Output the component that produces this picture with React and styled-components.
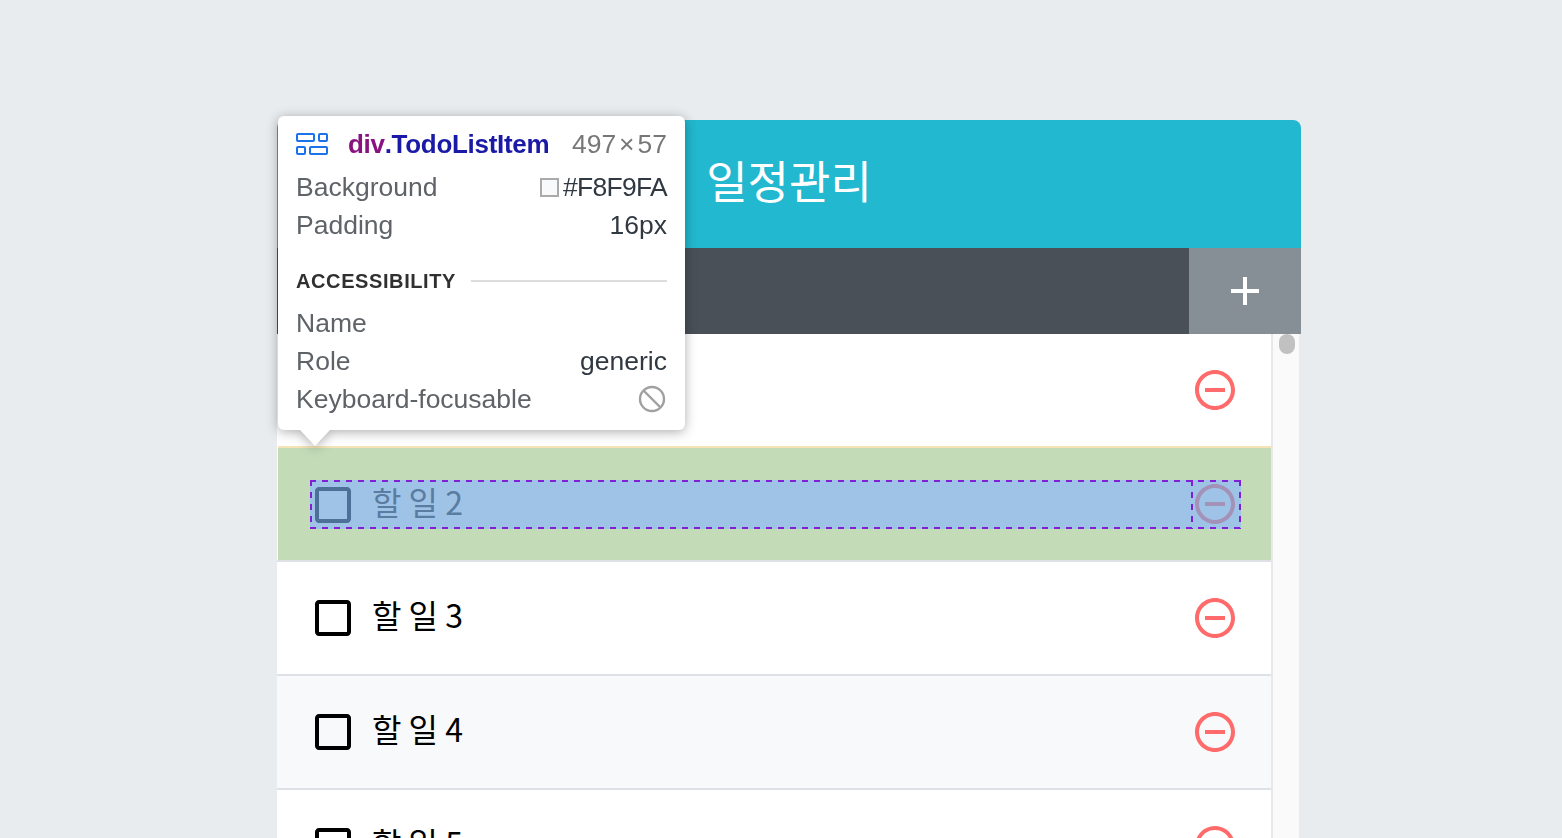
import React from 'react';
import styled, { createGlobalStyle } from 'styled-components';
import { MdAdd, MdCheckBoxOutlineBlank, MdRemoveCircleOutline } from 'react-icons/md';

const GlobalStyle = createGlobalStyle`
  html, body {
    margin: 0;
    height: 100%;
    overflow: hidden;
    background: #e9ecef;
    font-family: "Liberation Sans", "Noto Sans CJK KR", sans-serif;
  }
`;

const Template = styled.div`
  position: relative;
  width: 1024px;
  margin: 120px 0 0 277px;
`;

const Title = styled.div`
  height: 128px;
  box-sizing: border-box;
  padding-bottom: 10px;
  display: flex;
  align-items: center;
  justify-content: center;
  background: #22b8cf;
  color: #fff;
  font-family: "Noto Sans CJK KR", sans-serif;
  font-size: 45px;
  border-radius: 8px 8px 0 0;
`;

const InsertBar = styled.div`
  height: 86px;
  display: flex;
  justify-content: flex-end;
  background: #495057;
`;

const AddButton = styled.div`
  width: 112px;
  display: flex;
  align-items: center;
  justify-content: center;
  background: #868e96;
  color: #fff;
  font-size: 48px;
`;

const Body = styled.div`
  display: flex;
  width: 1022px;
  height: 504px;
  overflow: hidden;
`;

const List = styled.div`
  flex: 1;
  min-width: 0;
  background: #fff;
`;

const Scrollbar = styled.div`
  position: relative;
  width: 26px;
  border-left: 2px solid #e8e8e8;
  background: #fafafa;
`;

const Thumb = styled.div`
  margin-left: 6px;
  width: 16px;
  height: 20px;
  border-radius: 8px;
  background: #c1c1c1;
`;

const Row = styled.div`
  display: flex;
  align-items: center;
  padding: 32px;
  border-top: 2px solid #dee2e6;
  background: ${(p) => (p.$alt ? '#f8f9fa' : '#fff')};
  &:first-child {
    border-top: none;
  }
`;

const Check = styled.div`
  flex: 1;
  min-width: 0;
  display: flex;
  align-items: center;
  height: 48px;
  font-size: 48px;
  color: #000;
`;

const Label = styled.span`
  margin: 0 0 8px 15px;
  font-family: "Noto Sans CJK KR", sans-serif;
  font-size: 32px;
  line-height: 48px;
  color: ${(p) => p.$color || '#000'};
`;

const Remove = styled.div`
  width: 48px;
  height: 48px;
  display: flex;
  font-size: 48px;
  color: ${(p) => p.$color || '#ff6b6b'};
`;

const dashH = 'repeating-linear-gradient(90deg, #7f1fd6 0 6px, transparent 6px 12px)';
const dashV = 'repeating-linear-gradient(180deg, #7f1fd6 0 6px, transparent 6px 12px)';

/* devtools inspect overlay: margin / padding / content boxes */
const HighlightRow = styled.div`
  display: flex;
  margin: 0 -1px 0 1px;
  padding: 32px 31px 31px 32px;
  border-top: 2px solid #f5e2b5;
  background: #c3dbb7;
`;

const HighlightBox = styled.div`
  flex: 1;
  min-width: 0;
  display: flex;
  height: 49px;
  background-color: #9fc3e7;
  background-image: ${dashH}, ${dashH}, ${dashV}, ${dashV};
  background-size: 100% 2px, 100% 2px, 2px 100%, 2px 100%;
  background-position: 0 0, 0 100%, 0 0, 100% 0;
  background-repeat: no-repeat;
  ${Check} {
    height: 49px;
    margin-left: -1px;
    color: #4d7099;
    background: ${dashV} 100% 0 / 2px 100% no-repeat;
  }
  ${Remove} {
    margin-left: -2px;
    margin-right: 2px;
    height: 49px;
  }
`;

const Tooltip = styled.div`
  position: absolute;
  left: 1px;
  top: -4px;
  width: 407px;
  height: 314px;
  box-sizing: border-box;
  padding: 12px 18px 0 18px;
  border-radius: 6px;
  background: #fff;
  font-size: 26.5px;
  color: #303942;
  filter: drop-shadow(0 2px 6px rgba(0, 0, 0, 0.32));
  &::after {
    content: '';
    position: absolute;
    left: 22px;
    bottom: -16px;
    border-left: 15px solid transparent;
    border-right: 15px solid transparent;
    border-top: 16px solid #fff;
  }
`;

const TipHead = styled.div`
  display: flex;
  align-items: center;
  height: 32px;
  margin-bottom: 8px;
`;

const TipName = styled.span`
  font-size: 26px;
  font-weight: 700;
  letter-spacing: -0.3px;
  color: ${(p) => p.$color};
  margin-left: ${(p) => p.$gap || 0}px;
`;

const TipSize = styled.span`
  margin-left: auto;
  color: #777;
  word-spacing: -4.4px;
`;

const TipRow = styled.div`
  display: flex;
  align-items: center;
  justify-content: space-between;
  height: 38px;
`;

const TipLabel = styled.span`
  color: #5f6368;
`;

const TipValue = styled.span`
  display: flex;
  align-items: center;
  gap: 4px;
  letter-spacing: ${(p) => (p.$tight ? '-0.7px' : 'normal')};
`;

const Swatch = styled.span`
  width: 19px;
  height: 19px;
  box-sizing: border-box;
  border: 2px solid #aaa;
  background: #f8f9fa;
`;

const Section = styled.div`
  display: flex;
  align-items: center;
  gap: 15px;
  margin: 25px 0 11px;
  height: 24px;
  font-size: 20px;
  font-weight: 700;
  letter-spacing: 0.6px;
  color: #303030;
  &::after {
    content: '';
    flex: 1;
    height: 2px;
    background: #ddd;
  }
`;

const GridIcon = () => (
  <svg width="32" height="22" viewBox="0 0 32 22" fill="none" stroke="#1a73e8" strokeWidth="2">
    <rect x="1" y="1" width="17" height="7" rx="1" />
    <rect x="23" y="1" width="8" height="7" rx="1" />
    <rect x="1" y="14" width="8" height="7" rx="1" />
    <rect x="14" y="14" width="17" height="7" rx="1" />
  </svg>
);

const BanIcon = () => (
  <svg width="28" height="28" viewBox="0 0 28 28" fill="none" stroke="#a0a0a0" strokeWidth="2.4" style={{ marginRight: 1 }}>
    <circle cx="14" cy="14" r="12" />
    <path d="M5.5 5.5l17 17" />
  </svg>
);

const todos = [
  { id: 1, text: '할 일 1' },
  { id: 2, text: '할 일 2', inspected: true },
  { id: 3, text: '할 일 3' },
  { id: 4, text: '할 일 4', alt: true },
  { id: 5, text: '할 일 5' },
];

const App = () => {
  return (
    <>
      <GlobalStyle />
      <Template>
        <Title>일정관리</Title>
        <InsertBar>
          <AddButton>
            <MdAdd />
          </AddButton>
        </InsertBar>
        <Body>
          <List>
            {todos.map((todo) =>
              todo.inspected ? (
                <HighlightRow key={todo.id}>
                  <HighlightBox>
                    <Check>
                      <MdCheckBoxOutlineBlank />
                      <Label $color="#5a7ca0">{todo.text}</Label>
                    </Check>
                    <Remove $color="#a491b8">
                      <MdRemoveCircleOutline />
                    </Remove>
                  </HighlightBox>
                </HighlightRow>
              ) : (
                <Row key={todo.id} $alt={todo.alt}>
                  <Check>
                    <MdCheckBoxOutlineBlank />
                    <Label>{todo.text}</Label>
                  </Check>
                  <Remove>
                    <MdRemoveCircleOutline />
                  </Remove>
                </Row>
              )
            )}
          </List>
          <Scrollbar>
            <Thumb />
          </Scrollbar>
        </Body>
        <Tooltip>
          <TipHead>
            <GridIcon />
            <TipName $color="#881280" $gap={20}>div</TipName>
            <TipName $color="#1a1aa6">.TodoListItem</TipName>
            <TipSize>497 × 57</TipSize>
          </TipHead>
          <TipRow>
            <TipLabel>Background</TipLabel>
            <TipValue $tight>
              <Swatch />
              #F8F9FA
            </TipValue>
          </TipRow>
          <TipRow>
            <TipLabel>Padding</TipLabel>
            <TipValue>16px</TipValue>
          </TipRow>
          <Section>ACCESSIBILITY</Section>
          <TipRow>
            <TipLabel>Name</TipLabel>
          </TipRow>
          <TipRow>
            <TipLabel>Role</TipLabel>
            <TipValue>generic</TipValue>
          </TipRow>
          <TipRow>
            <TipLabel>Keyboard-focusable</TipLabel>
            <BanIcon />
          </TipRow>
        </Tooltip>
      </Template>
    </>
  );
};

export default App;
